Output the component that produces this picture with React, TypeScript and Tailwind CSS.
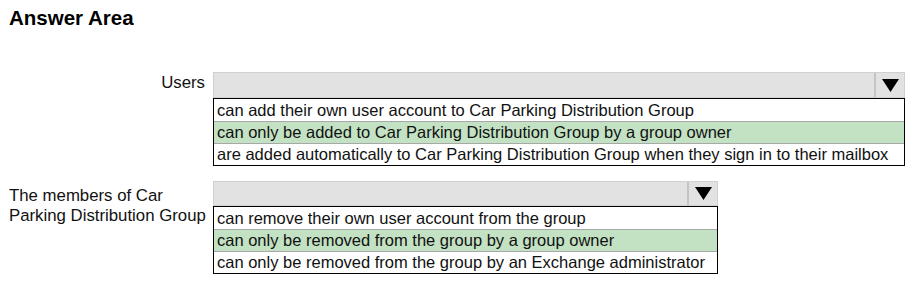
import React from 'react';

interface DropProps {
  width: string;
  options: string[];
  selected: number;
  boxHeight: string;
}

function Dropdown({ width, options, selected, boxHeight }: DropProps) {
  return (
    <div className={`flex flex-col ${width}`}>
      <div className={`flex ${boxHeight} border border-[#d0d0d0] bg-[#e2e2e2]`}>
        <div className="flex-1" />
        <div className="flex w-[30px] items-center justify-center border-l-2 border-[#c4c4c4]">
          <svg width="17" height="13" viewBox="0 0 17 13">
            <polygon points="0,0 17,0 8.5,13" fill="#000" />
          </svg>
        </div>
      </div>
      <div className="border border-black bg-white">
        {options.map((o, i) => (
          <div
            key={i}
            className={`flex h-[22px] items-center whitespace-nowrap px-[3px] text-[16.5px] leading-none text-[#111] ${
              i > 0 ? 'border-t border-[#a8a8a8]' : ''
            } ${i === selected ? 'bg-[#c3e1c3]' : ''}`}
          >
            {o}
          </div>
        ))}
      </div>
    </div>
  );
}

export default function App() {
  return (
    <div
      className="h-[281px] w-[913px] bg-white pl-[9px] pt-[6px] text-[#111]"
      style={{ fontFamily: '"Liberation Sans", Arial, sans-serif' }}
    >
      <h1 className="text-[20.5px] font-bold leading-[24px] text-black">Answer Area</h1>

      <div className="mt-[42px] flex gap-[8px]">
        <div className="w-[196px] whitespace-nowrap pt-[1px] text-right text-[16.8px] leading-[20px]">Users</div>
        <Dropdown
          width="w-[692px]"
          boxHeight="h-[26px]"
          selected={1}
          options={[
            'can add their own user account to Car Parking Distribution Group',
            'can only be added to Car Parking Distribution Group by a group owner',
            'are added automatically to Car Parking Distribution Group when they sign in to their mailbox',
          ]}
        />
      </div>

      <div className="mt-[15px] flex gap-[8px]">
        <div className="w-[196px] whitespace-nowrap pt-[5px] text-[16.8px] leading-[20px]">
          The members of Car
          <br />
          Parking Distribution Group
        </div>
        <Dropdown
          width="w-[505px]"
          boxHeight="h-[25px]"
          selected={1}
          options={[
            'can remove their own user account from the group',
            'can only be removed from the group by a group owner',
            'can only be removed from the group by an Exchange administrator',
          ]}
        />
      </div>
    </div>
  );
}
